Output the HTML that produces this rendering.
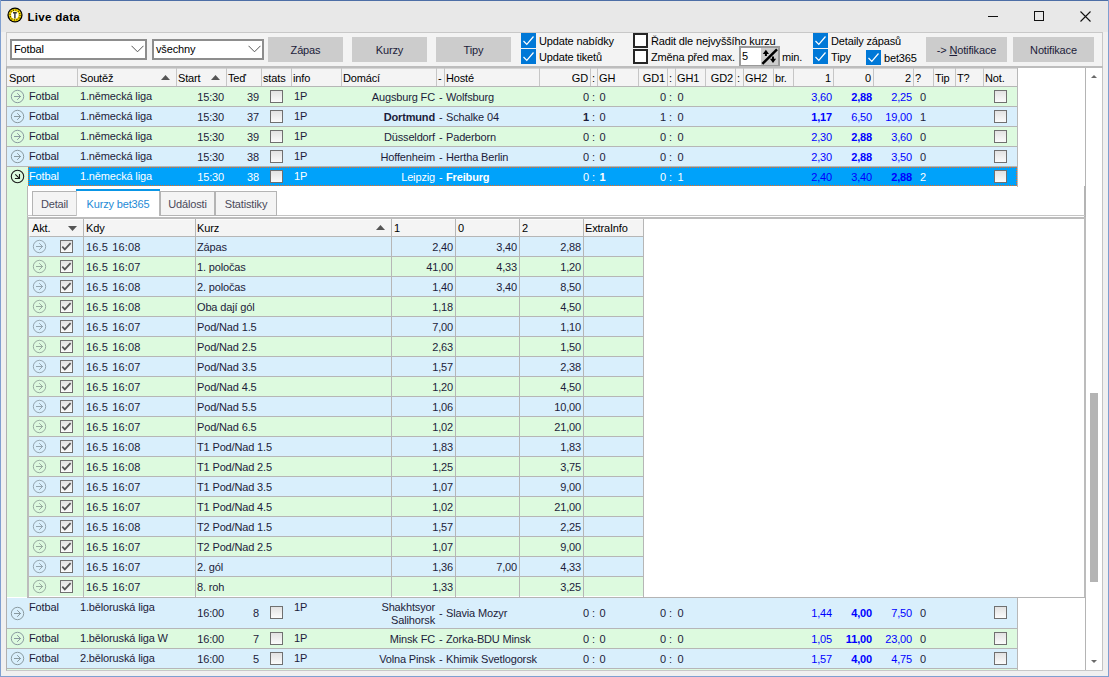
<!DOCTYPE html><html><head><meta charset="utf-8"><style>
*{box-sizing:border-box;margin:0;padding:0}
html,body{width:1109px;height:677px;overflow:hidden}
body{position:relative;background:#f0f0f0;font-family:"Liberation Sans",sans-serif;font-size:11px;color:#1c1c3a;letter-spacing:-0.15px}
.a{position:absolute}
.t{position:absolute;white-space:nowrap;line-height:19px;height:19px}
.r{text-align:right}
.b{font-weight:bold}
.cbx{position:absolute;width:15px;height:15px;background:#0078d7}
.cbu{position:absolute;width:15px;height:15px;border:2px solid #262626;background:#fff}
.btn{position:absolute;background:#cccccc;text-align:center;line-height:25px;padding-top:1px;height:25px}
.gcb{position:absolute;width:13px;height:13px;border:1px solid #707070;background:linear-gradient(#e2e2e2,#fbfbfb)}
</style></head><body>

<div class="a" style="left:0;top:0;width:1109px;height:1px;background:#4d6ea6"></div>
<div class="a" style="left:0;top:0;width:1px;height:677px;background:#7f9fd0"></div>
<div class="a" style="left:1108px;top:0;width:1px;height:677px;background:#7f9fd0"></div>
<div class="a" style="left:0;top:676px;width:1109px;height:1px;background:#7f9fd0"></div>
<div class="a" style="left:1px;top:1px;width:1107px;height:31px;background:#e8e8e8"></div>
<svg class="a" style="left:7px;top:7px" width="16" height="16" viewBox="0 0 16 16">
<circle cx="8" cy="8" r="7.6" fill="#000"/>
<circle cx="8" cy="8" r="6.3" fill="#f5d400"/>
<circle cx="8" cy="8" r="5" fill="none" stroke="#2a2a00" stroke-width="1.2" stroke-dasharray="1 1.6"/>
<circle cx="7.8" cy="8" r="3.7" fill="#fff"/>
<path d="M6 5h3.8v1.4h-1.2v5h-1.4v-5h-1.2z" fill="#333"/></svg>
<div class="t b" style="left:27.5px;top:7px;font-size:11.6px;color:#000;letter-spacing:0.25px">Live data</div>
<div class="a" style="left:988px;top:16px;width:10px;height:1px;background:#111"></div>
<div class="a" style="left:1034px;top:11px;width:10px;height:10px;border:1px solid #111"></div>
<svg class="a" style="left:1080px;top:11px" width="11" height="11" viewBox="0 0 11 11"><path d="M0.5 0.5L10.5 10.5M10.5 0.5L0.5 10.5" stroke="#111" stroke-width="1.1"/></svg>
<div class="a" style="left:6px;top:32px;width:1097px;height:36px;background:#f3f3f3;border-top:1px solid #c8c8c8;border-left:1px solid #c8c8c8;border-right:1px solid #c8c8c8"></div>
<div class="a" style="left:10px;top:39px;width:137px;height:21px;border:2px solid #8d8d8d;background:#fff"></div>
<div class="t" style="left:14px;top:39px;line-height:20px;color:#000">Fotbal</div>
<svg class="a" style="left:131px;top:45px" width="13" height="8" viewBox="0 0 13 8"><path d="M0.5 0.8L6.5 6.8L12.5 0.8" fill="none" stroke="#555" stroke-width="1"/></svg>
<div class="a" style="left:152px;top:39px;width:112px;height:21px;border:2px solid #8d8d8d;background:#fff"></div>
<div class="t" style="left:156px;top:39px;line-height:20px;color:#000">všechny</div>
<svg class="a" style="left:248px;top:45px" width="13" height="8" viewBox="0 0 13 8"><path d="M0.5 0.8L6.5 6.8L12.5 0.8" fill="none" stroke="#555" stroke-width="1"/></svg>
<div class="btn" style="left:268px;top:37px;width:75px">Zápas</div>
<div class="btn" style="left:352px;top:37px;width:75px">Kurzy</div>
<div class="btn" style="left:436px;top:37px;width:75px">Tipy</div>
<svg class="a" style="left:521px;top:33px" width="15" height="15" viewBox="0 0 15 15"><rect width="15" height="15" fill="#0078d7"/><path d="M2.5 8L5.8 11.3L12.5 3.5" fill="none" stroke="#fff" stroke-width="1.2"/></svg>
<svg class="a" style="left:521px;top:49px" width="15" height="15" viewBox="0 0 15 15"><rect width="15" height="15" fill="#0078d7"/><path d="M2.5 8L5.8 11.3L12.5 3.5" fill="none" stroke="#fff" stroke-width="1.2"/></svg>
<div class="t" style="left:539px;top:32px;color:#000">Update nabídky</div>
<div class="t" style="left:539px;top:48px;color:#000">Update tiketů</div>
<div class="cbu" style="left:633px;top:33px"></div>
<div class="cbu" style="left:633px;top:49px"></div>
<div class="t" style="left:651px;top:32px;color:#000">Řadit dle nejvyššího kurzu</div>
<div class="t" style="left:651px;top:48px;color:#000;width:88px;overflow:hidden">Změna před max.</div>
<div class="a" style="left:739px;top:46px;width:41px;height:21px;border:2px solid #9a9a9a;background:#fff"></div>
<div class="a" style="left:761px;top:48px;width:17px;height:17px;background:#cccccc"></div>
<div class="t" style="left:742px;top:47px;color:#000">5</div>
<svg class="a" style="left:761px;top:48px" width="17" height="17" viewBox="0 0 17 17">
<path d="M1.4 15.8L16 1.3" stroke="#000" stroke-width="2.5"/>
<path d="M4.9 5v3" stroke="#000" stroke-width="2"/><path d="M1.8 5.9L4.9 1.8L8 5.9z" fill="#000"/>
<path d="M12 8.6v3" stroke="#000" stroke-width="2"/><path d="M8.9 10.8L12 14.9L15.1 10.8z" fill="#000"/>
</svg>
<div class="t" style="left:782px;top:48px;color:#000">min.</div>
<svg class="a" style="left:813px;top:33px" width="15" height="15" viewBox="0 0 15 15"><rect width="15" height="15" fill="#0078d7"/><path d="M2.5 8L5.8 11.3L12.5 3.5" fill="none" stroke="#fff" stroke-width="1.2"/></svg>
<svg class="a" style="left:813px;top:49px" width="15" height="15" viewBox="0 0 15 15"><rect width="15" height="15" fill="#0078d7"/><path d="M2.5 8L5.8 11.3L12.5 3.5" fill="none" stroke="#fff" stroke-width="1.2"/></svg>
<svg class="a" style="left:866px;top:50px" width="15" height="15" viewBox="0 0 15 15"><rect width="15" height="15" fill="#0078d7"/><path d="M2.5 8L5.8 11.3L12.5 3.5" fill="none" stroke="#fff" stroke-width="1.2"/></svg>
<div class="t" style="left:831px;top:32px;color:#000">Detaily zápasů</div>
<div class="t" style="left:831px;top:48px;color:#000">Tipy</div>
<div class="t" style="left:884px;top:49px;color:#000">bet365</div>
<div class="btn" style="left:926px;top:37px;width:81px">-&gt; <u>N</u>otifikace</div>
<div class="btn" style="left:1013px;top:37px;width:81px">Notifikace</div>
<div class="a" style="left:6px;top:66px;width:1097px;height:605px;background:#fff;border-top:2px solid #bdbdbd;border-left:1px solid #b0b0b0;border-bottom:1px solid #c8c8c8"></div>
<div class="a" style="left:7px;top:68px;width:1010px;height:19px;background:#f4f4f4;border-top:1px solid #d4d4d4;border-bottom:1px solid #b6b6b6"></div>
<div class="a" style="left:77px;top:68px;width:1px;height:18px;background:#c6c6c6"></div>
<div class="a" style="left:176px;top:68px;width:1px;height:18px;background:#c6c6c6"></div>
<div class="a" style="left:226px;top:68px;width:1px;height:18px;background:#c6c6c6"></div>
<div class="a" style="left:261px;top:68px;width:1px;height:18px;background:#c6c6c6"></div>
<div class="a" style="left:291px;top:68px;width:1px;height:18px;background:#c6c6c6"></div>
<div class="a" style="left:341px;top:68px;width:1px;height:18px;background:#c6c6c6"></div>
<div class="a" style="left:436px;top:68px;width:1px;height:18px;background:#c6c6c6"></div>
<div class="a" style="left:444px;top:68px;width:1px;height:18px;background:#c6c6c6"></div>
<div class="a" style="left:539px;top:68px;width:1px;height:18px;background:#c6c6c6"></div>
<div class="a" style="left:590px;top:68px;width:1px;height:18px;background:#c6c6c6"></div>
<div class="a" style="left:597px;top:68px;width:1px;height:18px;background:#c6c6c6"></div>
<div class="a" style="left:638px;top:68px;width:1px;height:18px;background:#c6c6c6"></div>
<div class="a" style="left:667px;top:68px;width:1px;height:18px;background:#c6c6c6"></div>
<div class="a" style="left:675px;top:68px;width:1px;height:18px;background:#c6c6c6"></div>
<div class="a" style="left:705px;top:68px;width:1px;height:18px;background:#c6c6c6"></div>
<div class="a" style="left:735px;top:68px;width:1px;height:18px;background:#c6c6c6"></div>
<div class="a" style="left:743px;top:68px;width:1px;height:18px;background:#c6c6c6"></div>
<div class="a" style="left:773px;top:68px;width:1px;height:18px;background:#c6c6c6"></div>
<div class="a" style="left:793px;top:68px;width:1px;height:18px;background:#c6c6c6"></div>
<div class="a" style="left:833px;top:68px;width:1px;height:18px;background:#c6c6c6"></div>
<div class="a" style="left:873px;top:68px;width:1px;height:18px;background:#c6c6c6"></div>
<div class="a" style="left:913px;top:68px;width:1px;height:18px;background:#c6c6c6"></div>
<div class="a" style="left:933px;top:68px;width:1px;height:18px;background:#c6c6c6"></div>
<div class="a" style="left:955px;top:68px;width:1px;height:18px;background:#c6c6c6"></div>
<div class="a" style="left:983px;top:68px;width:1px;height:18px;background:#c6c6c6"></div>
<div class="a" style="left:1017px;top:68px;width:1px;height:18px;background:#c6c6c6"></div>
<div class="t" style="left:9px;top:69px;color:#000">Sport</div>
<div class="t" style="left:80px;top:69px;color:#000">Soutěž</div>
<div class="t" style="left:178px;top:69px;color:#000">Start</div>
<div class="t" style="left:228px;top:69px;color:#000">Teď</div>
<div class="t" style="left:263px;top:69px;color:#000">stats</div>
<div class="t" style="left:293px;top:69px;color:#000">info</div>
<div class="t" style="left:343px;top:69px;color:#000">Domácí</div>
<div class="t" style="left:438px;top:69px;color:#000">-</div>
<div class="t" style="left:446px;top:69px;color:#000">Hosté</div>
<div class="t r" style="right:521px;top:69px;color:#000">GD</div>
<div class="t" style="left:592px;top:69px;color:#000">:</div>
<div class="t" style="left:599px;top:69px;color:#000">GH</div>
<div class="t r" style="right:444px;top:69px;color:#000">GD1</div>
<div class="t" style="left:669px;top:69px;color:#000">:</div>
<div class="t" style="left:677px;top:69px;color:#000">GH1</div>
<div class="t r" style="right:376px;top:69px;color:#000">GD2</div>
<div class="t" style="left:737px;top:69px;color:#000">:</div>
<div class="t" style="left:745px;top:69px;color:#000">GH2</div>
<div class="t" style="left:775px;top:69px;color:#000">br.</div>
<div class="t r" style="right:278px;top:69px;color:#000">1</div>
<div class="t r" style="right:238px;top:69px;color:#000">0</div>
<div class="t r" style="right:198px;top:69px;color:#000">2</div>
<div class="t" style="left:915px;top:69px;color:#000">?</div>
<div class="t" style="left:935px;top:69px;color:#000">Tip</div>
<div class="t" style="left:957px;top:69px;color:#000">T?</div>
<div class="t" style="left:985px;top:69px;color:#000">Not.</div>
<svg class="a" style="left:161px;top:75px" width="9" height="5" viewBox="0 0 9 5"><path d="M0 5L4.5 0L9 5z" fill="#555"/></svg>
<svg class="a" style="left:211px;top:75px" width="9" height="5" viewBox="0 0 9 5"><path d="M0 5L4.5 0L9 5z" fill="#555"/></svg>
<div class="a" style="left:7px;top:87px;width:1010px;height:19px;background:#ddfadf"></div>
<div class="a" style="left:7px;top:106px;width:1010px;height:1px;background:#b6b6b6"></div>
<svg class="a" style="left:10px;top:89px" width="15" height="15" viewBox="0 0 15 15"><circle cx="7.5" cy="7.5" r="6.2" fill="none" stroke="#8a9aa0" stroke-width="1"/><path d="M4 7.5h7M7.2 4.2L10.5 7.5L7.2 10.8" fill="none" stroke="#8a9aa0" stroke-width="1"/></svg>
<div class="t" style="left:29px;top:87px;color:#1c1c3a">Fotbal</div>
<div class="t" style="left:80px;top:87px;color:#1c1c3a">1.německá liga</div>
<div class="t r" style="right:885px;top:88px;color:#1c1c3a">15:30</div>
<div class="t r" style="right:850px;top:88px;color:#1c1c3a">39</div>
<div class="gcb" style="left:270px;top:90px"></div>
<div class="t" style="left:294px;top:87px;color:#1c1c3a">1P</div>
<div class="t r" style="right:674px;top:88px;color:#1c1c3a">Augsburg FC</div>
<div class="t" style="left:439px;top:88px;color:#1c1c3a">-</div>
<div class="t" style="left:446px;top:88px;color:#1c1c3a">Wolfsburg</div>
<div class="t r" style="right:520px;top:88px;color:#1c1c3a">0</div>
<div class="t" style="left:592px;top:88px;color:#1c1c3a">:</div>
<div class="t" style="left:599.5px;top:88px;color:#1c1c3a">0</div>
<div class="t r" style="right:443px;top:88px;color:#1c1c3a">0</div>
<div class="t" style="left:669px;top:88px;color:#1c1c3a">:</div>
<div class="t" style="left:677.5px;top:88px;color:#1c1c3a">0</div>
<div class="t r" style="right:277px;top:88px;color:#0000ff">3,60</div>
<div class="t r b" style="right:237px;top:88px;color:#0000ff">2,88</div>
<div class="t r" style="right:197px;top:88px;color:#0000ff">2,25</div>
<div class="t" style="left:920px;top:88px;color:#1c1c3a">0</div>
<div class="gcb" style="left:994px;top:90px"></div>
<div class="a" style="left:7px;top:107px;width:1010px;height:19px;background:#d9effc"></div>
<div class="a" style="left:7px;top:126px;width:1010px;height:1px;background:#b6b6b6"></div>
<svg class="a" style="left:10px;top:109px" width="15" height="15" viewBox="0 0 15 15"><circle cx="7.5" cy="7.5" r="6.2" fill="none" stroke="#8a9aa0" stroke-width="1"/><path d="M4 7.5h7M7.2 4.2L10.5 7.5L7.2 10.8" fill="none" stroke="#8a9aa0" stroke-width="1"/></svg>
<div class="t" style="left:29px;top:107px;color:#1c1c3a">Fotbal</div>
<div class="t" style="left:80px;top:107px;color:#1c1c3a">1.německá liga</div>
<div class="t r" style="right:885px;top:108px;color:#1c1c3a">15:30</div>
<div class="t r" style="right:850px;top:108px;color:#1c1c3a">37</div>
<div class="gcb" style="left:270px;top:110px"></div>
<div class="t" style="left:294px;top:107px;color:#1c1c3a">1P</div>
<div class="t r b" style="right:674px;top:108px;color:#1c1c3a">Dortmund</div>
<div class="t" style="left:439px;top:108px;color:#1c1c3a">-</div>
<div class="t" style="left:446px;top:108px;color:#1c1c3a">Schalke 04</div>
<div class="t r b" style="right:520px;top:108px;color:#1c1c3a">1</div>
<div class="t" style="left:592px;top:108px;color:#1c1c3a">:</div>
<div class="t" style="left:599.5px;top:108px;color:#1c1c3a">0</div>
<div class="t r" style="right:443px;top:108px;color:#1c1c3a">1</div>
<div class="t" style="left:669px;top:108px;color:#1c1c3a">:</div>
<div class="t" style="left:677.5px;top:108px;color:#1c1c3a">0</div>
<div class="t r b" style="right:277px;top:108px;color:#0000ff">1,17</div>
<div class="t r" style="right:237px;top:108px;color:#0000ff">6,50</div>
<div class="t r" style="right:197px;top:108px;color:#0000ff">19,00</div>
<div class="t" style="left:920px;top:108px;color:#1c1c3a">1</div>
<div class="gcb" style="left:994px;top:110px"></div>
<div class="a" style="left:7px;top:127px;width:1010px;height:19px;background:#ddfadf"></div>
<div class="a" style="left:7px;top:146px;width:1010px;height:1px;background:#b6b6b6"></div>
<svg class="a" style="left:10px;top:129px" width="15" height="15" viewBox="0 0 15 15"><circle cx="7.5" cy="7.5" r="6.2" fill="none" stroke="#8a9aa0" stroke-width="1"/><path d="M4 7.5h7M7.2 4.2L10.5 7.5L7.2 10.8" fill="none" stroke="#8a9aa0" stroke-width="1"/></svg>
<div class="t" style="left:29px;top:127px;color:#1c1c3a">Fotbal</div>
<div class="t" style="left:80px;top:127px;color:#1c1c3a">1.německá liga</div>
<div class="t r" style="right:885px;top:128px;color:#1c1c3a">15:30</div>
<div class="t r" style="right:850px;top:128px;color:#1c1c3a">39</div>
<div class="gcb" style="left:270px;top:130px"></div>
<div class="t" style="left:294px;top:127px;color:#1c1c3a">1P</div>
<div class="t r" style="right:674px;top:128px;color:#1c1c3a">Düsseldorf</div>
<div class="t" style="left:439px;top:128px;color:#1c1c3a">-</div>
<div class="t" style="left:446px;top:128px;color:#1c1c3a">Paderborn</div>
<div class="t r" style="right:520px;top:128px;color:#1c1c3a">0</div>
<div class="t" style="left:592px;top:128px;color:#1c1c3a">:</div>
<div class="t" style="left:599.5px;top:128px;color:#1c1c3a">0</div>
<div class="t r" style="right:443px;top:128px;color:#1c1c3a">0</div>
<div class="t" style="left:669px;top:128px;color:#1c1c3a">:</div>
<div class="t" style="left:677.5px;top:128px;color:#1c1c3a">0</div>
<div class="t r" style="right:277px;top:128px;color:#0000ff">2,30</div>
<div class="t r b" style="right:237px;top:128px;color:#0000ff">2,88</div>
<div class="t r" style="right:197px;top:128px;color:#0000ff">3,60</div>
<div class="t" style="left:920px;top:128px;color:#1c1c3a">0</div>
<div class="gcb" style="left:994px;top:130px"></div>
<div class="a" style="left:7px;top:147px;width:1010px;height:19px;background:#d9effc"></div>
<div class="a" style="left:7px;top:166px;width:1010px;height:1px;background:#b6b6b6"></div>
<svg class="a" style="left:10px;top:149px" width="15" height="15" viewBox="0 0 15 15"><circle cx="7.5" cy="7.5" r="6.2" fill="none" stroke="#8a9aa0" stroke-width="1"/><path d="M4 7.5h7M7.2 4.2L10.5 7.5L7.2 10.8" fill="none" stroke="#8a9aa0" stroke-width="1"/></svg>
<div class="t" style="left:29px;top:147px;color:#1c1c3a">Fotbal</div>
<div class="t" style="left:80px;top:147px;color:#1c1c3a">1.německá liga</div>
<div class="t r" style="right:885px;top:148px;color:#1c1c3a">15:30</div>
<div class="t r" style="right:850px;top:148px;color:#1c1c3a">38</div>
<div class="gcb" style="left:270px;top:150px"></div>
<div class="t" style="left:294px;top:147px;color:#1c1c3a">1P</div>
<div class="t r" style="right:674px;top:148px;color:#1c1c3a">Hoffenheim</div>
<div class="t" style="left:439px;top:148px;color:#1c1c3a">-</div>
<div class="t" style="left:446px;top:148px;color:#1c1c3a">Hertha Berlin</div>
<div class="t r" style="right:520px;top:148px;color:#1c1c3a">0</div>
<div class="t" style="left:592px;top:148px;color:#1c1c3a">:</div>
<div class="t" style="left:599.5px;top:148px;color:#1c1c3a">0</div>
<div class="t r" style="right:443px;top:148px;color:#1c1c3a">0</div>
<div class="t" style="left:669px;top:148px;color:#1c1c3a">:</div>
<div class="t" style="left:677.5px;top:148px;color:#1c1c3a">0</div>
<div class="t r" style="right:277px;top:148px;color:#0000ff">2,30</div>
<div class="t r b" style="right:237px;top:148px;color:#0000ff">2,88</div>
<div class="t r" style="right:197px;top:148px;color:#0000ff">3,50</div>
<div class="t" style="left:920px;top:148px;color:#1c1c3a">0</div>
<div class="gcb" style="left:994px;top:150px"></div>
<div class="a" style="left:7px;top:167px;width:1010px;height:19px;background:#ddfadf"></div>
<div class="a" style="left:7px;top:186px;width:1010px;height:1px;background:#b6b6b6"></div>
<div class="a" style="left:7px;top:167px;width:21px;height:19px;background:#ddfadf"></div>
<div class="a" style="left:28px;top:167px;width:989px;height:19px;background:#00a2fa;border:1px dotted #f26a1b"></div>
<svg class="a" style="left:10px;top:169px" width="15" height="15" viewBox="0 0 15 15"><circle cx="7.5" cy="7.5" r="6.2" fill="none" stroke="#1a1a1a" stroke-width="1.1"/><path d="M5.3 5.3L9.2 9.2M4.9 9.5h4.6V4.9" fill="none" stroke="#1a1a1a" stroke-width="1.1"/></svg>
<div class="t" style="left:29px;top:167px;color:#fff">Fotbal</div>
<div class="t" style="left:80px;top:167px;color:#fff">1.německá liga</div>
<div class="t r" style="right:885px;top:168px;color:#fff">15:30</div>
<div class="t r" style="right:850px;top:168px;color:#fff">38</div>
<div class="gcb" style="left:270px;top:170px"></div>
<div class="t" style="left:294px;top:167px;color:#fff">1P</div>
<div class="t r" style="right:674px;top:168px;color:#fff">Leipzig</div>
<div class="t" style="left:439px;top:168px;color:#fff">-</div>
<div class="t b" style="left:446px;top:168px;color:#fff">Freiburg</div>
<div class="t r" style="right:520px;top:168px;color:#fff">0</div>
<div class="t" style="left:592px;top:168px;color:#fff">:</div>
<div class="t b" style="left:599.5px;top:168px;color:#fff">1</div>
<div class="t r" style="right:443px;top:168px;color:#fff">0</div>
<div class="t" style="left:669px;top:168px;color:#fff">:</div>
<div class="t" style="left:677.5px;top:168px;color:#fff">1</div>
<div class="t r" style="right:277px;top:168px;color:#0000ff">2,40</div>
<div class="t r" style="right:237px;top:168px;color:#0000ff">3,40</div>
<div class="t r b" style="right:197px;top:168px;color:#0000ff">2,88</div>
<div class="t" style="left:920px;top:168px;color:#fff">2</div>
<div class="gcb" style="left:994px;top:170px"></div>
<div class="a" style="left:7px;top:186px;width:20px;height:411px;background:#ddfadf"></div>
<div class="a" style="left:27px;top:186px;width:1059px;height:412px;background:#fff;border-left:1px solid #b8b8b8;border-right:2px solid #b4b4b4;border-bottom:1px solid #b4b4b4"></div>
<div class="a" style="left:7px;top:598px;width:1010px;height:30px;background:#d9effc"></div>
<div class="a" style="left:7px;top:628px;width:1010px;height:1px;background:#b6b6b6"></div>
<svg class="a" style="left:10px;top:606px" width="15" height="15" viewBox="0 0 15 15"><circle cx="7.5" cy="7.5" r="6.2" fill="none" stroke="#8a9aa0" stroke-width="1"/><path d="M4 7.5h7M7.2 4.2L10.5 7.5L7.2 10.8" fill="none" stroke="#8a9aa0" stroke-width="1"/></svg>
<div class="t" style="left:29px;top:598px;color:#1c1c3a">Fotbal</div>
<div class="t" style="left:80px;top:598px;color:#1c1c3a">1.běloruská liga</div>
<div class="t r" style="right:885px;top:604px;color:#1c1c3a">16:00</div>
<div class="t r" style="right:850px;top:604px;color:#1c1c3a">8</div>
<div class="gcb" style="left:270px;top:606px"></div>
<div class="t" style="left:294px;top:598px;color:#1c1c3a">1P</div>
<div class="a r" style="right:674px;top:601px;line-height:13px;white-space:nowrap;color:#1c1c3a">Shakhtsyor<br>Salihorsk</div>
<div class="t" style="left:439px;top:604px;color:#1c1c3a">-</div>
<div class="t" style="left:446px;top:604px;color:#1c1c3a">Slavia Mozyr</div>
<div class="t r" style="right:520px;top:604px;color:#1c1c3a">0</div>
<div class="t" style="left:592px;top:604px;color:#1c1c3a">:</div>
<div class="t" style="left:599.5px;top:604px;color:#1c1c3a">0</div>
<div class="t r" style="right:443px;top:604px;color:#1c1c3a">0</div>
<div class="t" style="left:669px;top:604px;color:#1c1c3a">:</div>
<div class="t" style="left:677.5px;top:604px;color:#1c1c3a">0</div>
<div class="t r" style="right:277px;top:604px;color:#0000ff">1,44</div>
<div class="t r b" style="right:237px;top:604px;color:#0000ff">4,00</div>
<div class="t r" style="right:197px;top:604px;color:#0000ff">7,50</div>
<div class="t" style="left:920px;top:604px;color:#1c1c3a">0</div>
<div class="gcb" style="left:994px;top:606px"></div>
<div class="a" style="left:7px;top:629px;width:1010px;height:19px;background:#ddfadf"></div>
<div class="a" style="left:7px;top:648px;width:1010px;height:1px;background:#b6b6b6"></div>
<svg class="a" style="left:10px;top:631px" width="15" height="15" viewBox="0 0 15 15"><circle cx="7.5" cy="7.5" r="6.2" fill="none" stroke="#8a9aa0" stroke-width="1"/><path d="M4 7.5h7M7.2 4.2L10.5 7.5L7.2 10.8" fill="none" stroke="#8a9aa0" stroke-width="1"/></svg>
<div class="t" style="left:29px;top:629px;color:#1c1c3a">Fotbal</div>
<div class="t" style="left:80px;top:629px;color:#1c1c3a">1.běloruská liga W</div>
<div class="t r" style="right:885px;top:630px;color:#1c1c3a">16:00</div>
<div class="t r" style="right:850px;top:630px;color:#1c1c3a">7</div>
<div class="gcb" style="left:270px;top:632px"></div>
<div class="t" style="left:294px;top:629px;color:#1c1c3a">1P</div>
<div class="t r" style="right:674px;top:630px;color:#1c1c3a">Minsk FC</div>
<div class="t" style="left:439px;top:630px;color:#1c1c3a">-</div>
<div class="t" style="left:446px;top:630px;color:#1c1c3a">Zorka-BDU Minsk</div>
<div class="t r" style="right:520px;top:630px;color:#1c1c3a">0</div>
<div class="t" style="left:592px;top:630px;color:#1c1c3a">:</div>
<div class="t" style="left:599.5px;top:630px;color:#1c1c3a">0</div>
<div class="t r" style="right:443px;top:630px;color:#1c1c3a">0</div>
<div class="t" style="left:669px;top:630px;color:#1c1c3a">:</div>
<div class="t" style="left:677.5px;top:630px;color:#1c1c3a">0</div>
<div class="t r" style="right:277px;top:630px;color:#0000ff">1,05</div>
<div class="t r b" style="right:237px;top:630px;color:#0000ff">11,00</div>
<div class="t r" style="right:197px;top:630px;color:#0000ff">23,00</div>
<div class="t" style="left:920px;top:630px;color:#1c1c3a">0</div>
<div class="gcb" style="left:994px;top:632px"></div>
<div class="a" style="left:7px;top:649px;width:1010px;height:19px;background:#d9effc"></div>
<div class="a" style="left:7px;top:668px;width:1010px;height:1px;background:#b6b6b6"></div>
<svg class="a" style="left:10px;top:651px" width="15" height="15" viewBox="0 0 15 15"><circle cx="7.5" cy="7.5" r="6.2" fill="none" stroke="#8a9aa0" stroke-width="1"/><path d="M4 7.5h7M7.2 4.2L10.5 7.5L7.2 10.8" fill="none" stroke="#8a9aa0" stroke-width="1"/></svg>
<div class="t" style="left:29px;top:649px;color:#1c1c3a">Fotbal</div>
<div class="t" style="left:80px;top:649px;color:#1c1c3a">2.běloruská liga</div>
<div class="t r" style="right:885px;top:650px;color:#1c1c3a">16:00</div>
<div class="t r" style="right:850px;top:650px;color:#1c1c3a">5</div>
<div class="gcb" style="left:270px;top:652px"></div>
<div class="t" style="left:294px;top:649px;color:#1c1c3a">1P</div>
<div class="t r" style="right:674px;top:650px;color:#1c1c3a">Volna Pinsk</div>
<div class="t" style="left:439px;top:650px;color:#1c1c3a">-</div>
<div class="t" style="left:446px;top:650px;color:#1c1c3a">Khimik Svetlogorsk</div>
<div class="t r" style="right:520px;top:650px;color:#1c1c3a">0</div>
<div class="t" style="left:592px;top:650px;color:#1c1c3a">:</div>
<div class="t" style="left:599.5px;top:650px;color:#1c1c3a">0</div>
<div class="t r" style="right:443px;top:650px;color:#1c1c3a">0</div>
<div class="t" style="left:669px;top:650px;color:#1c1c3a">:</div>
<div class="t" style="left:677.5px;top:650px;color:#1c1c3a">0</div>
<div class="t r" style="right:277px;top:650px;color:#0000ff">1,57</div>
<div class="t r b" style="right:237px;top:650px;color:#0000ff">4,00</div>
<div class="t r" style="right:197px;top:650px;color:#0000ff">4,75</div>
<div class="t" style="left:920px;top:650px;color:#1c1c3a">0</div>
<div class="gcb" style="left:994px;top:652px"></div>
<div class="a" style="left:7px;top:669px;width:1010px;height:1px;background:#ddfadf"></div>
<div class="a" style="left:1017px;top:68px;width:1px;height:119px;background:#b8b8b8"></div>
<div class="a" style="left:1017px;top:598px;width:1px;height:72px;background:#b8b8b8"></div>
<div class="a" style="left:1085px;top:68px;width:18px;height:602px;background:#fff;border-left:1px solid #b4b4b4;border-right:1px solid #c4c4c4"></div>
<svg class="a" style="left:1091px;top:75px" width="6" height="3" viewBox="0 0 6 3"><path d="M0 3L3 0L6 3z" fill="#6a6a6a"/></svg>
<svg class="a" style="left:1091px;top:660px" width="6" height="3" viewBox="0 0 6 3"><path d="M0 0L3 3L6 0z" fill="#6a6a6a"/></svg>
<div class="a" style="left:1090px;top:393px;width:8px;height:189px;background:#b4b4b4"></div>
<div class="a" style="left:27px;top:215px;width:1058px;height:1px;background:#c4c4c4"></div>
<div class="a" style="left:32px;top:191px;width:45px;height:25px;background:#f4f4f4;border:1px solid #b4b4b4"></div>
<div class="t" style="left:32px;width:45px;text-align:center;top:195px;color:#4a4a5a">Detail</div>
<div class="a" style="left:160px;top:191px;width:55px;height:25px;background:#f4f4f4;border:1px solid #b4b4b4"></div>
<div class="t" style="left:160px;width:55px;text-align:center;top:195px;color:#4a4a5a">Události</div>
<div class="a" style="left:215px;top:191px;width:62px;height:25px;background:#f4f4f4;border:1px solid #b4b4b4"></div>
<div class="t" style="left:215px;width:62px;text-align:center;top:195px;color:#4a4a5a">Statistiky</div>
<div class="a" style="left:76px;top:189px;width:84px;height:27px;background:#fff;border-left:1px solid #c8c8c8;border-right:1px solid #b8b8b8"></div>
<div class="a" style="left:76px;top:189px;width:84px;height:2px;background:#0a96e6"></div>
<div class="t" style="left:76px;width:84px;text-align:center;top:195px;color:#1e8ad6">Kurzy bet365</div>
<div class="a" style="left:27px;top:217px;width:1059px;height:380px;border-top:2px solid #bcbcbc;border-left:2px solid #bcbcbc;border-right:2px solid #bcbcbc"></div>
<div class="a" style="left:29px;top:219px;width:615px;height:18px;background:#f4f4f4;border-top:1px solid #fcfcfc;border-left:1px solid #fcfcfc;border-bottom:1px solid #b6b6b6"></div>
<div class="a" style="left:83px;top:219px;width:1px;height:378px;background:#b6b6b6"></div>
<div class="a" style="left:195px;top:219px;width:1px;height:378px;background:#b6b6b6"></div>
<div class="a" style="left:391px;top:219px;width:1px;height:378px;background:#b6b6b6"></div>
<div class="a" style="left:455px;top:219px;width:1px;height:378px;background:#b6b6b6"></div>
<div class="a" style="left:519px;top:219px;width:1px;height:378px;background:#b6b6b6"></div>
<div class="a" style="left:583px;top:219px;width:1px;height:378px;background:#b6b6b6"></div>
<div class="a" style="left:643px;top:219px;width:1px;height:378px;background:#b6b6b6"></div>
<div class="t" style="left:32px;top:219px;color:#000">Akt.</div>
<div class="t" style="left:86px;top:219px;color:#000">Kdy</div>
<div class="t" style="left:197px;top:219px;color:#000">Kurz</div>
<div class="t" style="left:394px;top:219px;color:#000">1</div>
<div class="t" style="left:458px;top:219px;color:#000">0</div>
<div class="t" style="left:522px;top:219px;color:#000">2</div>
<div class="t" style="left:585px;top:219px;color:#000">ExtraInfo</div>
<svg class="a" style="left:68px;top:226px" width="9" height="5" viewBox="0 0 9 5"><path d="M0 0L4.5 5L9 0z" fill="#555"/></svg>
<svg class="a" style="left:376px;top:225px" width="9" height="5" viewBox="0 0 9 5"><path d="M0 5L4.5 0L9 5z" fill="#555"/></svg>
<div class="a" style="left:29px;top:237px;width:615px;height:19px;background:#d9effc"></div>
<div class="a" style="left:29px;top:256px;width:615px;height:1px;background:#b6b6b6"></div>
<svg class="a" style="left:32px;top:239px" width="15" height="15" viewBox="0 0 15 15"><circle cx="7.5" cy="7.5" r="6.2" fill="none" stroke="#95a6b0" stroke-width="1"/><path d="M4 7.5h7M7.2 4.2L10.5 7.5L7.2 10.8" fill="none" stroke="#95a6b0" stroke-width="1"/></svg>
<div class="gcb" style="left:60px;top:240px"></div>
<svg class="a" style="left:60px;top:240px" width="13" height="13" viewBox="0 0 13 13"><path d="M2.3 6.6L4.8 9.4L10.6 3.2" fill="none" stroke="#555555" stroke-width="1.7"/></svg>
<div class="t" style="left:86px;top:238px;letter-spacing:0.15px;word-spacing:1px">16.5 16:08</div>
<div class="t" style="left:197px;top:238px">Zápas</div>
<div class="t r" style="right:656px;top:238px">2,40</div>
<div class="t r" style="right:592px;top:238px">3,40</div>
<div class="t r" style="right:528px;top:238px">2,88</div>
<div class="a" style="left:29px;top:257px;width:615px;height:19px;background:#ddfadf"></div>
<div class="a" style="left:29px;top:276px;width:615px;height:1px;background:#b6b6b6"></div>
<svg class="a" style="left:32px;top:259px" width="15" height="15" viewBox="0 0 15 15"><circle cx="7.5" cy="7.5" r="6.2" fill="none" stroke="#98aca0" stroke-width="1"/><path d="M4 7.5h7M7.2 4.2L10.5 7.5L7.2 10.8" fill="none" stroke="#98aca0" stroke-width="1"/></svg>
<div class="gcb" style="left:60px;top:260px"></div>
<svg class="a" style="left:60px;top:260px" width="13" height="13" viewBox="0 0 13 13"><path d="M2.3 6.6L4.8 9.4L10.6 3.2" fill="none" stroke="#555555" stroke-width="1.7"/></svg>
<div class="t" style="left:86px;top:258px;letter-spacing:0.15px;word-spacing:1px">16.5 16:07</div>
<div class="t" style="left:197px;top:258px">1. poločas</div>
<div class="t r" style="right:656px;top:258px">41,00</div>
<div class="t r" style="right:592px;top:258px">4,33</div>
<div class="t r" style="right:528px;top:258px">1,20</div>
<div class="a" style="left:29px;top:277px;width:615px;height:19px;background:#d9effc"></div>
<div class="a" style="left:29px;top:296px;width:615px;height:1px;background:#b6b6b6"></div>
<svg class="a" style="left:32px;top:279px" width="15" height="15" viewBox="0 0 15 15"><circle cx="7.5" cy="7.5" r="6.2" fill="none" stroke="#95a6b0" stroke-width="1"/><path d="M4 7.5h7M7.2 4.2L10.5 7.5L7.2 10.8" fill="none" stroke="#95a6b0" stroke-width="1"/></svg>
<div class="gcb" style="left:60px;top:280px"></div>
<svg class="a" style="left:60px;top:280px" width="13" height="13" viewBox="0 0 13 13"><path d="M2.3 6.6L4.8 9.4L10.6 3.2" fill="none" stroke="#555555" stroke-width="1.7"/></svg>
<div class="t" style="left:86px;top:278px;letter-spacing:0.15px;word-spacing:1px">16.5 16:08</div>
<div class="t" style="left:197px;top:278px">2. poločas</div>
<div class="t r" style="right:656px;top:278px">1,40</div>
<div class="t r" style="right:592px;top:278px">3,40</div>
<div class="t r" style="right:528px;top:278px">8,50</div>
<div class="a" style="left:29px;top:297px;width:615px;height:19px;background:#ddfadf"></div>
<div class="a" style="left:29px;top:316px;width:615px;height:1px;background:#b6b6b6"></div>
<svg class="a" style="left:32px;top:299px" width="15" height="15" viewBox="0 0 15 15"><circle cx="7.5" cy="7.5" r="6.2" fill="none" stroke="#98aca0" stroke-width="1"/><path d="M4 7.5h7M7.2 4.2L10.5 7.5L7.2 10.8" fill="none" stroke="#98aca0" stroke-width="1"/></svg>
<div class="gcb" style="left:60px;top:300px"></div>
<svg class="a" style="left:60px;top:300px" width="13" height="13" viewBox="0 0 13 13"><path d="M2.3 6.6L4.8 9.4L10.6 3.2" fill="none" stroke="#555555" stroke-width="1.7"/></svg>
<div class="t" style="left:86px;top:298px;letter-spacing:0.15px;word-spacing:1px">16.5 16:08</div>
<div class="t" style="left:197px;top:298px">Oba dají gól</div>
<div class="t r" style="right:656px;top:298px">1,18</div>
<div class="t r" style="right:528px;top:298px">4,50</div>
<div class="a" style="left:29px;top:317px;width:615px;height:19px;background:#d9effc"></div>
<div class="a" style="left:29px;top:336px;width:615px;height:1px;background:#b6b6b6"></div>
<svg class="a" style="left:32px;top:319px" width="15" height="15" viewBox="0 0 15 15"><circle cx="7.5" cy="7.5" r="6.2" fill="none" stroke="#95a6b0" stroke-width="1"/><path d="M4 7.5h7M7.2 4.2L10.5 7.5L7.2 10.8" fill="none" stroke="#95a6b0" stroke-width="1"/></svg>
<div class="gcb" style="left:60px;top:320px"></div>
<svg class="a" style="left:60px;top:320px" width="13" height="13" viewBox="0 0 13 13"><path d="M2.3 6.6L4.8 9.4L10.6 3.2" fill="none" stroke="#555555" stroke-width="1.7"/></svg>
<div class="t" style="left:86px;top:318px;letter-spacing:0.15px;word-spacing:1px">16.5 16:07</div>
<div class="t" style="left:197px;top:318px">Pod/Nad 1.5</div>
<div class="t r" style="right:656px;top:318px">7,00</div>
<div class="t r" style="right:528px;top:318px">1,10</div>
<div class="a" style="left:29px;top:337px;width:615px;height:19px;background:#ddfadf"></div>
<div class="a" style="left:29px;top:356px;width:615px;height:1px;background:#b6b6b6"></div>
<svg class="a" style="left:32px;top:339px" width="15" height="15" viewBox="0 0 15 15"><circle cx="7.5" cy="7.5" r="6.2" fill="none" stroke="#98aca0" stroke-width="1"/><path d="M4 7.5h7M7.2 4.2L10.5 7.5L7.2 10.8" fill="none" stroke="#98aca0" stroke-width="1"/></svg>
<div class="gcb" style="left:60px;top:340px"></div>
<svg class="a" style="left:60px;top:340px" width="13" height="13" viewBox="0 0 13 13"><path d="M2.3 6.6L4.8 9.4L10.6 3.2" fill="none" stroke="#555555" stroke-width="1.7"/></svg>
<div class="t" style="left:86px;top:338px;letter-spacing:0.15px;word-spacing:1px">16.5 16:08</div>
<div class="t" style="left:197px;top:338px">Pod/Nad 2.5</div>
<div class="t r" style="right:656px;top:338px">2,63</div>
<div class="t r" style="right:528px;top:338px">1,50</div>
<div class="a" style="left:29px;top:357px;width:615px;height:19px;background:#d9effc"></div>
<div class="a" style="left:29px;top:376px;width:615px;height:1px;background:#b6b6b6"></div>
<svg class="a" style="left:32px;top:359px" width="15" height="15" viewBox="0 0 15 15"><circle cx="7.5" cy="7.5" r="6.2" fill="none" stroke="#95a6b0" stroke-width="1"/><path d="M4 7.5h7M7.2 4.2L10.5 7.5L7.2 10.8" fill="none" stroke="#95a6b0" stroke-width="1"/></svg>
<div class="gcb" style="left:60px;top:360px"></div>
<svg class="a" style="left:60px;top:360px" width="13" height="13" viewBox="0 0 13 13"><path d="M2.3 6.6L4.8 9.4L10.6 3.2" fill="none" stroke="#555555" stroke-width="1.7"/></svg>
<div class="t" style="left:86px;top:358px;letter-spacing:0.15px;word-spacing:1px">16.5 16:07</div>
<div class="t" style="left:197px;top:358px">Pod/Nad 3.5</div>
<div class="t r" style="right:656px;top:358px">1,57</div>
<div class="t r" style="right:528px;top:358px">2,38</div>
<div class="a" style="left:29px;top:377px;width:615px;height:19px;background:#ddfadf"></div>
<div class="a" style="left:29px;top:396px;width:615px;height:1px;background:#b6b6b6"></div>
<svg class="a" style="left:32px;top:379px" width="15" height="15" viewBox="0 0 15 15"><circle cx="7.5" cy="7.5" r="6.2" fill="none" stroke="#98aca0" stroke-width="1"/><path d="M4 7.5h7M7.2 4.2L10.5 7.5L7.2 10.8" fill="none" stroke="#98aca0" stroke-width="1"/></svg>
<div class="gcb" style="left:60px;top:380px"></div>
<svg class="a" style="left:60px;top:380px" width="13" height="13" viewBox="0 0 13 13"><path d="M2.3 6.6L4.8 9.4L10.6 3.2" fill="none" stroke="#555555" stroke-width="1.7"/></svg>
<div class="t" style="left:86px;top:378px;letter-spacing:0.15px;word-spacing:1px">16.5 16:07</div>
<div class="t" style="left:197px;top:378px">Pod/Nad 4.5</div>
<div class="t r" style="right:656px;top:378px">1,20</div>
<div class="t r" style="right:528px;top:378px">4,50</div>
<div class="a" style="left:29px;top:397px;width:615px;height:19px;background:#d9effc"></div>
<div class="a" style="left:29px;top:416px;width:615px;height:1px;background:#b6b6b6"></div>
<svg class="a" style="left:32px;top:399px" width="15" height="15" viewBox="0 0 15 15"><circle cx="7.5" cy="7.5" r="6.2" fill="none" stroke="#95a6b0" stroke-width="1"/><path d="M4 7.5h7M7.2 4.2L10.5 7.5L7.2 10.8" fill="none" stroke="#95a6b0" stroke-width="1"/></svg>
<div class="gcb" style="left:60px;top:400px"></div>
<svg class="a" style="left:60px;top:400px" width="13" height="13" viewBox="0 0 13 13"><path d="M2.3 6.6L4.8 9.4L10.6 3.2" fill="none" stroke="#555555" stroke-width="1.7"/></svg>
<div class="t" style="left:86px;top:398px;letter-spacing:0.15px;word-spacing:1px">16.5 16:07</div>
<div class="t" style="left:197px;top:398px">Pod/Nad 5.5</div>
<div class="t r" style="right:656px;top:398px">1,06</div>
<div class="t r" style="right:528px;top:398px">10,00</div>
<div class="a" style="left:29px;top:417px;width:615px;height:19px;background:#ddfadf"></div>
<div class="a" style="left:29px;top:436px;width:615px;height:1px;background:#b6b6b6"></div>
<svg class="a" style="left:32px;top:419px" width="15" height="15" viewBox="0 0 15 15"><circle cx="7.5" cy="7.5" r="6.2" fill="none" stroke="#98aca0" stroke-width="1"/><path d="M4 7.5h7M7.2 4.2L10.5 7.5L7.2 10.8" fill="none" stroke="#98aca0" stroke-width="1"/></svg>
<div class="gcb" style="left:60px;top:420px"></div>
<svg class="a" style="left:60px;top:420px" width="13" height="13" viewBox="0 0 13 13"><path d="M2.3 6.6L4.8 9.4L10.6 3.2" fill="none" stroke="#555555" stroke-width="1.7"/></svg>
<div class="t" style="left:86px;top:418px;letter-spacing:0.15px;word-spacing:1px">16.5 16:07</div>
<div class="t" style="left:197px;top:418px">Pod/Nad 6.5</div>
<div class="t r" style="right:656px;top:418px">1,02</div>
<div class="t r" style="right:528px;top:418px">21,00</div>
<div class="a" style="left:29px;top:437px;width:615px;height:19px;background:#d9effc"></div>
<div class="a" style="left:29px;top:456px;width:615px;height:1px;background:#b6b6b6"></div>
<svg class="a" style="left:32px;top:439px" width="15" height="15" viewBox="0 0 15 15"><circle cx="7.5" cy="7.5" r="6.2" fill="none" stroke="#95a6b0" stroke-width="1"/><path d="M4 7.5h7M7.2 4.2L10.5 7.5L7.2 10.8" fill="none" stroke="#95a6b0" stroke-width="1"/></svg>
<div class="gcb" style="left:60px;top:440px"></div>
<svg class="a" style="left:60px;top:440px" width="13" height="13" viewBox="0 0 13 13"><path d="M2.3 6.6L4.8 9.4L10.6 3.2" fill="none" stroke="#555555" stroke-width="1.7"/></svg>
<div class="t" style="left:86px;top:438px;letter-spacing:0.15px;word-spacing:1px">16.5 16:08</div>
<div class="t" style="left:197px;top:438px">T1 Pod/Nad 1.5</div>
<div class="t r" style="right:656px;top:438px">1,83</div>
<div class="t r" style="right:528px;top:438px">1,83</div>
<div class="a" style="left:29px;top:457px;width:615px;height:19px;background:#ddfadf"></div>
<div class="a" style="left:29px;top:476px;width:615px;height:1px;background:#b6b6b6"></div>
<svg class="a" style="left:32px;top:459px" width="15" height="15" viewBox="0 0 15 15"><circle cx="7.5" cy="7.5" r="6.2" fill="none" stroke="#98aca0" stroke-width="1"/><path d="M4 7.5h7M7.2 4.2L10.5 7.5L7.2 10.8" fill="none" stroke="#98aca0" stroke-width="1"/></svg>
<div class="gcb" style="left:60px;top:460px"></div>
<svg class="a" style="left:60px;top:460px" width="13" height="13" viewBox="0 0 13 13"><path d="M2.3 6.6L4.8 9.4L10.6 3.2" fill="none" stroke="#555555" stroke-width="1.7"/></svg>
<div class="t" style="left:86px;top:458px;letter-spacing:0.15px;word-spacing:1px">16.5 16:08</div>
<div class="t" style="left:197px;top:458px">T1 Pod/Nad 2.5</div>
<div class="t r" style="right:656px;top:458px">1,25</div>
<div class="t r" style="right:528px;top:458px">3,75</div>
<div class="a" style="left:29px;top:477px;width:615px;height:19px;background:#d9effc"></div>
<div class="a" style="left:29px;top:496px;width:615px;height:1px;background:#b6b6b6"></div>
<svg class="a" style="left:32px;top:479px" width="15" height="15" viewBox="0 0 15 15"><circle cx="7.5" cy="7.5" r="6.2" fill="none" stroke="#95a6b0" stroke-width="1"/><path d="M4 7.5h7M7.2 4.2L10.5 7.5L7.2 10.8" fill="none" stroke="#95a6b0" stroke-width="1"/></svg>
<div class="gcb" style="left:60px;top:480px"></div>
<svg class="a" style="left:60px;top:480px" width="13" height="13" viewBox="0 0 13 13"><path d="M2.3 6.6L4.8 9.4L10.6 3.2" fill="none" stroke="#555555" stroke-width="1.7"/></svg>
<div class="t" style="left:86px;top:478px;letter-spacing:0.15px;word-spacing:1px">16.5 16:07</div>
<div class="t" style="left:197px;top:478px">T1 Pod/Nad 3.5</div>
<div class="t r" style="right:656px;top:478px">1,07</div>
<div class="t r" style="right:528px;top:478px">9,00</div>
<div class="a" style="left:29px;top:497px;width:615px;height:19px;background:#ddfadf"></div>
<div class="a" style="left:29px;top:516px;width:615px;height:1px;background:#b6b6b6"></div>
<svg class="a" style="left:32px;top:499px" width="15" height="15" viewBox="0 0 15 15"><circle cx="7.5" cy="7.5" r="6.2" fill="none" stroke="#98aca0" stroke-width="1"/><path d="M4 7.5h7M7.2 4.2L10.5 7.5L7.2 10.8" fill="none" stroke="#98aca0" stroke-width="1"/></svg>
<div class="gcb" style="left:60px;top:500px"></div>
<svg class="a" style="left:60px;top:500px" width="13" height="13" viewBox="0 0 13 13"><path d="M2.3 6.6L4.8 9.4L10.6 3.2" fill="none" stroke="#555555" stroke-width="1.7"/></svg>
<div class="t" style="left:86px;top:498px;letter-spacing:0.15px;word-spacing:1px">16.5 16:07</div>
<div class="t" style="left:197px;top:498px">T1 Pod/Nad 4.5</div>
<div class="t r" style="right:656px;top:498px">1,02</div>
<div class="t r" style="right:528px;top:498px">21,00</div>
<div class="a" style="left:29px;top:517px;width:615px;height:19px;background:#d9effc"></div>
<div class="a" style="left:29px;top:536px;width:615px;height:1px;background:#b6b6b6"></div>
<svg class="a" style="left:32px;top:519px" width="15" height="15" viewBox="0 0 15 15"><circle cx="7.5" cy="7.5" r="6.2" fill="none" stroke="#95a6b0" stroke-width="1"/><path d="M4 7.5h7M7.2 4.2L10.5 7.5L7.2 10.8" fill="none" stroke="#95a6b0" stroke-width="1"/></svg>
<div class="gcb" style="left:60px;top:520px"></div>
<svg class="a" style="left:60px;top:520px" width="13" height="13" viewBox="0 0 13 13"><path d="M2.3 6.6L4.8 9.4L10.6 3.2" fill="none" stroke="#555555" stroke-width="1.7"/></svg>
<div class="t" style="left:86px;top:518px;letter-spacing:0.15px;word-spacing:1px">16.5 16:08</div>
<div class="t" style="left:197px;top:518px">T2 Pod/Nad 1.5</div>
<div class="t r" style="right:656px;top:518px">1,57</div>
<div class="t r" style="right:528px;top:518px">2,25</div>
<div class="a" style="left:29px;top:537px;width:615px;height:19px;background:#ddfadf"></div>
<div class="a" style="left:29px;top:556px;width:615px;height:1px;background:#b6b6b6"></div>
<svg class="a" style="left:32px;top:539px" width="15" height="15" viewBox="0 0 15 15"><circle cx="7.5" cy="7.5" r="6.2" fill="none" stroke="#98aca0" stroke-width="1"/><path d="M4 7.5h7M7.2 4.2L10.5 7.5L7.2 10.8" fill="none" stroke="#98aca0" stroke-width="1"/></svg>
<div class="gcb" style="left:60px;top:540px"></div>
<svg class="a" style="left:60px;top:540px" width="13" height="13" viewBox="0 0 13 13"><path d="M2.3 6.6L4.8 9.4L10.6 3.2" fill="none" stroke="#555555" stroke-width="1.7"/></svg>
<div class="t" style="left:86px;top:538px;letter-spacing:0.15px;word-spacing:1px">16.5 16:07</div>
<div class="t" style="left:197px;top:538px">T2 Pod/Nad 2.5</div>
<div class="t r" style="right:656px;top:538px">1,07</div>
<div class="t r" style="right:528px;top:538px">9,00</div>
<div class="a" style="left:29px;top:557px;width:615px;height:19px;background:#d9effc"></div>
<div class="a" style="left:29px;top:576px;width:615px;height:1px;background:#b6b6b6"></div>
<svg class="a" style="left:32px;top:559px" width="15" height="15" viewBox="0 0 15 15"><circle cx="7.5" cy="7.5" r="6.2" fill="none" stroke="#95a6b0" stroke-width="1"/><path d="M4 7.5h7M7.2 4.2L10.5 7.5L7.2 10.8" fill="none" stroke="#95a6b0" stroke-width="1"/></svg>
<div class="gcb" style="left:60px;top:560px"></div>
<svg class="a" style="left:60px;top:560px" width="13" height="13" viewBox="0 0 13 13"><path d="M2.3 6.6L4.8 9.4L10.6 3.2" fill="none" stroke="#555555" stroke-width="1.7"/></svg>
<div class="t" style="left:86px;top:558px;letter-spacing:0.15px;word-spacing:1px">16.5 16:07</div>
<div class="t" style="left:197px;top:558px">2. gól</div>
<div class="t r" style="right:656px;top:558px">1,36</div>
<div class="t r" style="right:592px;top:558px">7,00</div>
<div class="t r" style="right:528px;top:558px">4,33</div>
<div class="a" style="left:29px;top:577px;width:615px;height:19px;background:#ddfadf"></div>
<svg class="a" style="left:32px;top:579px" width="15" height="15" viewBox="0 0 15 15"><circle cx="7.5" cy="7.5" r="6.2" fill="none" stroke="#98aca0" stroke-width="1"/><path d="M4 7.5h7M7.2 4.2L10.5 7.5L7.2 10.8" fill="none" stroke="#98aca0" stroke-width="1"/></svg>
<div class="gcb" style="left:60px;top:580px"></div>
<svg class="a" style="left:60px;top:580px" width="13" height="13" viewBox="0 0 13 13"><path d="M2.3 6.6L4.8 9.4L10.6 3.2" fill="none" stroke="#555555" stroke-width="1.7"/></svg>
<div class="t" style="left:86px;top:578px;letter-spacing:0.15px;word-spacing:1px">16.5 16:07</div>
<div class="t" style="left:197px;top:578px">8. roh</div>
<div class="t r" style="right:656px;top:578px">1,33</div>
<div class="t r" style="right:528px;top:578px">3,25</div>
<div class="a" style="left:83px;top:219px;width:1px;height:378px;background:#b6b6b6"></div>
<div class="a" style="left:195px;top:219px;width:1px;height:378px;background:#b6b6b6"></div>
<div class="a" style="left:391px;top:219px;width:1px;height:378px;background:#b6b6b6"></div>
<div class="a" style="left:455px;top:219px;width:1px;height:378px;background:#b6b6b6"></div>
<div class="a" style="left:519px;top:219px;width:1px;height:378px;background:#b6b6b6"></div>
<div class="a" style="left:583px;top:219px;width:1px;height:378px;background:#b6b6b6"></div>
<div class="a" style="left:643px;top:219px;width:1px;height:378px;background:#b6b6b6"></div>
</body></html>
